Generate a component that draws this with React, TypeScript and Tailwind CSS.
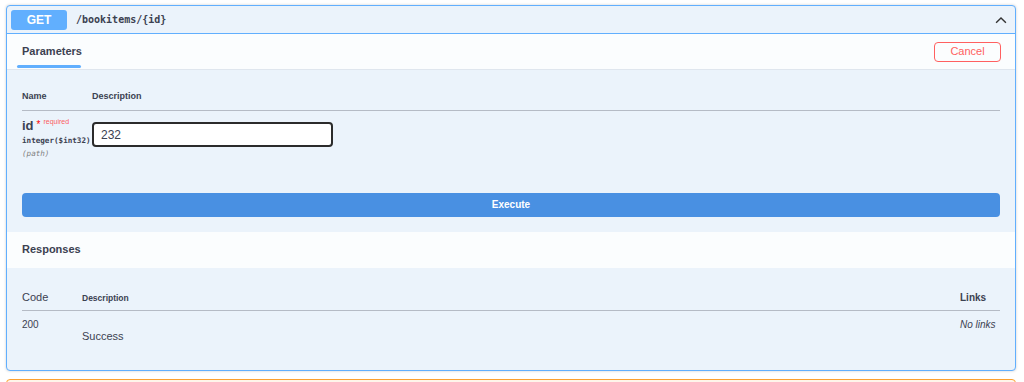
import React from "react";

export default function App() {
  const sans = { fontFamily: '"Liberation Sans", Arial, sans-serif' };
  const mono = { fontFamily: '"DejaVu Sans Mono", monospace' };
  return (
    <div className="w-[1024px] h-[382px] overflow-hidden bg-white pt-[5px] pl-[6px] pr-[8px]" style={sans}>
      <div className="border border-[#61affe] rounded-[4px] bg-[#ebf3fb] shadow-[0_0_3px_rgba(0,0,0,0.19)]">
        {/* summary */}
        <div className="h-[28px] flex items-center px-[4px] border-b border-[#61affe]">
          <div className="w-[56px] h-[20px] rounded-[3px] bg-[#61affe] text-white font-bold text-[12px] flex items-center justify-center">
            GET
          </div>
          <div className="ml-[9px] text-[10px] text-[#3b4151] font-semibold" style={mono}>
            /bookitems/{"{id}"}
          </div>
          <div className="flex-1" />
          <svg width="14" height="14" viewBox="0 0 20 20" className="mr-[3px]">
            <path d="M3 14 L10 7 L17 14" fill="none" stroke="#333" strokeWidth="2" />
          </svg>
        </div>
        {/* parameters header */}
        <div className="h-[36px] bg-white/80 flex items-center justify-between pl-[10px] pr-[14px] border-b border-[#dfe6ee]">
          <div className="h-full flex flex-col justify-center relative">
            <div className="px-[5px] text-[11px] font-bold text-[#3b4151]">Parameters</div>
            <div className="absolute left-0 bottom-[1px] w-[64px] h-[3px] bg-[#61affe] rounded-[2px]" />
          </div>
          <button className="w-[67px] h-[20px] border border-[#ff6060] rounded-[4px] text-[11px] text-[#ff6060] bg-transparent">
            Cancel
          </button>
        </div>
        {/* parameters body */}
        <div className="px-[15px] pt-[20px]">
          <div className="flex items-end h-[21px] border-b border-[#a8adb8]/80 pb-[7px] text-[9px] font-bold text-[#3b4151]">
            <div className="w-[70px]">Name</div>
            <div>Description</div>
          </div>
          <div className="flex pt-[7px] h-[80px]">
            <div className="w-[70px]">
              <div className="flex items-start">
                <span className="text-[13px] font-semibold text-[#3b4151] leading-[16px]">id</span>
                <span className="text-[#ff0000] text-[10px] ml-[3px] leading-[14px]">*</span>
                <span className="text-[#ff3030]/80 text-[7px] ml-[3px] leading-[8px]">required</span>
              </div>
              <div className="text-[7.6px] font-semibold text-[#3b4151] mt-[1px] leading-[12px]" style={mono}>
                integer($int32)
              </div>
              <div className="text-[7.6px] italic text-[#808080] leading-[14px]" style={mono}>
                (path)
              </div>
            </div>
            <div>
              <div className="w-[241px] h-[25px] mt-[4px] border-2 border-[#2b2b2b] rounded-[4px] bg-white flex items-center px-[7px] text-[12px] text-[#3b4151]">
                232
              </div>
            </div>
          </div>
          <button className="w-full h-[24px] bg-[#4990e2] rounded-[4px] text-white text-[10px] font-bold" style={{ fontFamily: '"Liberation Sans Narrow", "Liberation Sans", sans-serif' }}>
            Execute
          </button>
          <div className="h-[15px]" />
        </div>
        {/* responses header */}
        <div className="h-[36px] bg-white/80 flex items-center pl-[15px] text-[11px] font-bold text-[#3b4151]">
          Responses
        </div>
        {/* responses body */}
        <div className="px-[15px] pt-[21px]">
          <div className="flex items-end border-b border-[#a8adb8]/80 pb-[5px] text-[#3b4151]">
            <div className="w-[60px] text-[11px]">Code</div>
            <div className="flex-1 text-[8.5px] font-bold">Description</div>
            <div className="w-[40px] text-[10px] font-bold">Links</div>
          </div>
          <div className="flex pt-[6px] h-[59px] text-[#3b4151]">
            <div className="w-[60px] text-[10px]">200</div>
            <div className="flex-1 text-[11px] pt-[11px]">Success</div>
            <div className="w-[40px] text-[10px] italic">No links</div>
          </div>
        </div>
      </div>
      <div className="mt-[8px] h-[20px] border border-[#fca130] rounded-[4px] bg-[#fff5ea]" />
    </div>
  );
}
